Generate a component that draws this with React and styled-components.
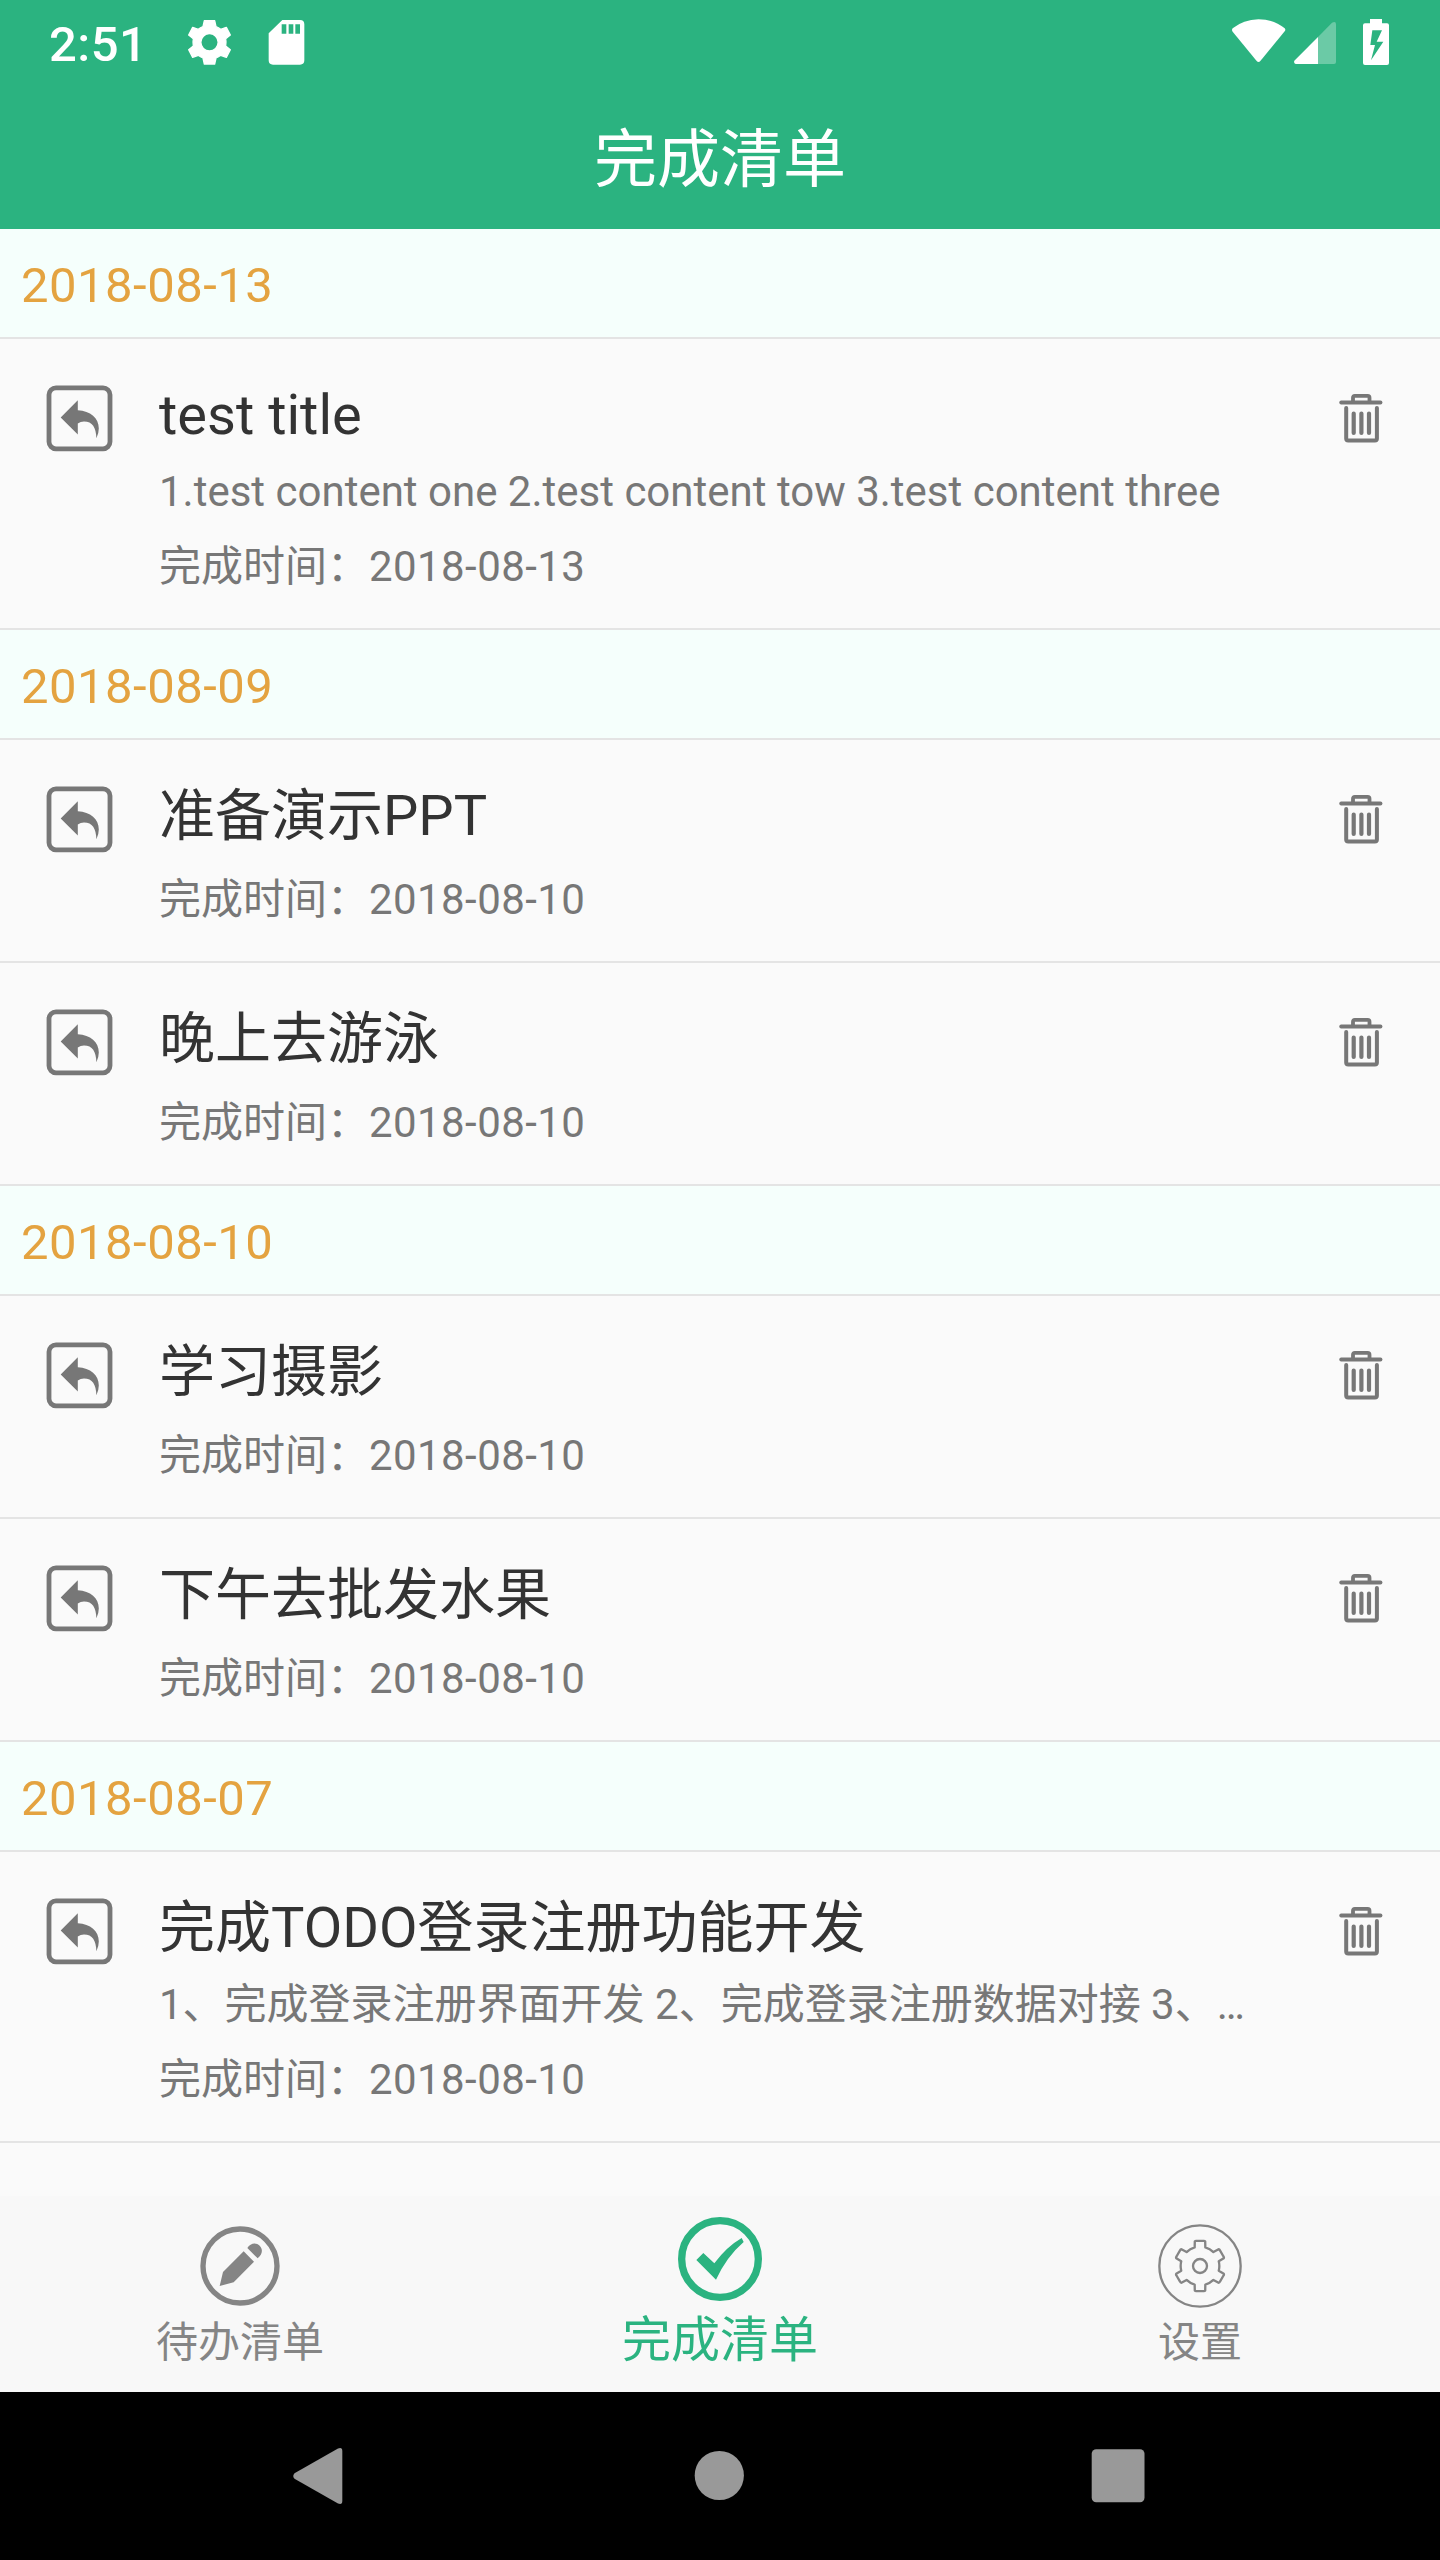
import React from "react";
import styled, { createGlobalStyle } from "styled-components";

const GlobalStyle = createGlobalStyle`
  * { box-sizing: border-box; }
  html, body { margin: 0; padding: 0; background: #fafafa; }
  body { font-family: Roboto, "Noto Sans CJK SC", sans-serif; }
  svg { display: block; flex: none; }
`;

const GREEN = "#2bb380";
const GREY = "#777777";
const TAB_GREY = "#858585";

const Screen = styled.div`
  width: 1440px;
  height: 2560px;
  display: flex;
  flex-direction: column;
  background: #fafafa;
  overflow: hidden;
`;

const Header = styled.header`
  flex: none;
  height: 229px;
  background: ${GREEN};
  color: #fff;
`;

const StatusBar = styled.div`
  display: flex;
  height: 84px;
  padding: 0 51px 0 49px;
`;

const Clock = styled.span`
  width: 138px;
  padding-top: 3px;
  font-size: 49px;
  font-weight: 500;
  letter-spacing: 0.5px;
  line-height: 84px;
`;

const StatusGroup = styled.div`
  display: flex;
  gap: ${(p) => p.$gap}px;
`;

const Spacer = styled.div`
  flex: 1;
`;

const PageTitle = styled.h1`
  margin: 0;
  padding-top: 3px;
  font-size: 63px;
  font-weight: 400;
  line-height: 145px;
  text-align: center;
`;

const List = styled.main`
  flex: 1;
`;

const DateHeader = styled.h2`
  margin: 0;
  height: 110px;
  padding: 3px 0 0 21px;
  border-bottom: 2px solid #e4e4e4;
  background: #f5fffc;
  color: #e4a340;
  font-size: 49px;
  font-weight: 400;
  letter-spacing: 0.49px;
  line-height: 108px;
`;

const Row = styled.article`
  display: flex;
  align-items: flex-start;
  padding: 41px 57px 33px 46px;
  border-bottom: 2px solid #e4e4e4;
`;

const IconButton = styled.button`
  flex: none;
  margin: ${(p) => p.$top}px 0 0;
  padding: 0;
  border: 0;
  background: none;
`;

const RowBody = styled.div`
  flex: 1;
  min-width: 0;
  padding-left: 46px;
  white-space: nowrap;
`;

const ItemTitle = styled.h3`
  margin: 0;
  color: #333;
  font-size: 56px;
  font-weight: 400;
  line-height: 70px;
`;

const ItemContent = styled.p`
  margin: 14px 0 -2px;
  color: ${GREY};
  font-size: 42px;
  line-height: 56px;
`;

const ItemTime = styled.p`
  margin: 21px 0 0;
  color: ${GREY};
  font-size: 42px;
  line-height: 56px;
`;

const TimeValue = styled.time`
  letter-spacing: 0.42px;
`;

const TabBar = styled.nav`
  flex: none;
  display: grid;
  grid-template-columns: repeat(3, 1fr);
  height: 196px;
  background: #f8f8f8;
`;

const Tab = styled.div`
  display: flex;
  flex-direction: column;
  align-items: center;
  gap: ${(p) => (p.$active ? 10 : 5)}px;
  padding-top: ${(p) => (p.$active ? 21 : 28)}px;
  color: ${(p) => (p.$active ? GREEN : TAB_GREY)};
  font-size: ${(p) => (p.$active ? 49 : 42)}px;
  line-height: 60px;
`;

const SystemNav = styled.footer`
  flex: none;
  display: grid;
  grid-template-columns: repeat(3, 400px);
  justify-items: center;
  align-items: center;
  height: 168px;
  padding-left: 119px;
  background: #000;
`;

const GearSolid = () => (
  <svg width="45" height="84" viewBox="561 0 135 252">
    <path
      fill="#fff"
      stroke="#fff"
      strokeWidth="4"
      strokeLinejoin="round"
      fillRule="evenodd"
      d="M613 62H644L648 80Q656 83 662 88L679 82L691 105L677 116Q679 127 677 138L691 149L679 172L662 166Q656 171 648 174L644 192H613L609 174Q601 171 595 166L578 172L566 149L580 138Q578 127 580 116L566 105L578 82L595 88Q601 83 609 80ZM628.5 101a26 26 0 1 0 0 52a26 26 0 1 0 0-52Z"
    />
  </svg>
);

const SdCard = () => (
  <svg width="37" height="84" viewBox="804 0 111 252">
    <path
      fill="#fff"
      fillRule="evenodd"
      d="M847 60H900Q913 60 913 73V181Q913 194 900 194H819Q806 194 806 181V100ZM845 73V101H859V73ZM866 73V101H880V73ZM886 73V101H900V73Z"
    />
  </svg>
);

const Wifi = () => (
  <svg width="54" height="84" viewBox="216 0 162 252">
    <path
      fill="#fff"
      d="M218 85Q250 58 295.500 57.500Q341 58 374 85Q378 89 374 94L301 183Q295.500 189 290 183L218 95Q214 90 218 85Z"
    />
  </svg>
);

const Signal = () => (
  <svg width="42" height="84" viewBox="402 0 126 252">
    <path fill="#fff" fillOpacity=".3" d="M474 111L516 68Q528 62 528 73V186Q528 192 522 192H474Z" />
    <path fill="#fff" d="M474 111V192H407Q400 190 403 182Z" />
  </svg>
);

const Battery = () => (
  <svg width="26" height="84" viewBox="609 0 78 252">
    <path
      fill="#fff"
      fillRule="evenodd"
      d="M630 57H666V70H681Q687 70 687 76V189Q687 195 681 195H615Q609 195 609 189V76Q609 70 615 70H630ZM637 91L631 135H645L633 181L670 125H650L666 91Z"
    />
  </svg>
);

const RestoreIcon = () => (
  <svg width="67" height="67" viewBox="0 0 67 67">
    <rect x="3" y="2.800" width="61" height="61" rx="7" fill="none" stroke={GREY} strokeWidth="4.800" />
    <path
      fill={GREY}
      d="M14.700 32.600L31.800 15.300V25.200C44.500 25.800 52.800 33 52.800 43.500Q52.800 48.500 50.400 53.200C50 42.500 46.500 36.600 38 36.600Q34.500 36.700 31.800 38.500V49.500Z"
    />
  </svg>
);

const TrashIcon = () => (
  <svg width="44" height="50" viewBox="0 0 44 50" fill="none" stroke={GREY} strokeLinecap="round" strokeLinejoin="round">
    <path strokeWidth="3.800" d="M2.200 9.500H41.500" />
    <path strokeWidth="3.800" strokeLinecap="butt" d="M14 9V4.700Q14 2.900 15.800 2.900H28.700Q30.500 2.900 30.500 4.700V9" />
    <path strokeWidth="4" d="M7.200 15V45.600Q7.200 47.600 9.200 47.600H35.900Q37.900 47.600 37.900 45.600V15" />
    <path strokeWidth="4.200" d="M14.700 20.600V39.900M22.400 20.600V39.900M30 20.600V39.900" />
  </svg>
);

const PencilTabIcon = () => (
  <svg width="84" height="84" viewBox="234 132 252 252">
    <circle cx="360" cy="258" r="111" fill="none" stroke={TAB_GREY} strokeWidth="16" />
    <path
      fill={TAB_GREY}
      d="M299 318L309 276L371 214L402 245L341 307ZM382 204C391 189 408 186 419 197C430 208 427 223 413 235Z"
    />
  </svg>
);

const CheckTabIcon = () => (
  <svg width="84" height="84" viewBox="294 111 252 252">
    <circle cx="420" cy="237" r="115" fill="none" stroke={GREEN} strokeWidth="22" />
    <path fill={GREEN} d="M349 240L370 219L403 250Q440 200 485 174L491 186Q440 230 408 299Z" />
  </svg>
);

const polar = (radius, degrees) => {
  const a = (degrees * Math.PI) / 180;
  return `${(126 + radius * Math.sin(a)).toFixed(1)} ${(126 - radius * Math.cos(a)).toFixed(1)}`;
};

const gearOutline =
  [0, 60, 120, 180, 240, 300]
    .map((angle, i) => {
      const start = i === 0 ? `M${polar(58, -16)}` : `A58 58 0 0 1 ${polar(58, angle - 16)}`;
      return `${start}L${polar(75, angle - 12)}Q${polar(77, angle - 10.5)} ${polar(76, angle - 8)}L${polar(76, angle + 8)}Q${polar(77, angle + 10.5)} ${polar(75, angle + 12)}L${polar(58, angle + 16)}`;
    })
    .join("") + `A58 58 0 0 1 ${polar(58, -16)}Z`;

const SettingsTabIcon = () => (
  <svg width="84" height="84" viewBox="0 0 252 252" fill="none" stroke={TAB_GREY} strokeWidth="7" strokeLinejoin="round">
    <circle cx="126" cy="126" r="122" />
    <circle cx="126" cy="126" r="21" />
    <path d={gearOutline} />
  </svg>
);

const BackKey = () => (
  <svg width="60" height="60" viewBox="0 0 60 60">
    <path fill="#999" d="M5.500 27.200L49 2.500Q53.300 .8 53.300 5V55Q53.300 59.200 49 57.500L5.500 32.800Q3 30 5.500 27.200Z" />
  </svg>
);

const HomeKey = () => (
  <svg width="60" height="60" viewBox="0 0 60 60">
    <circle cx="30.300" cy="29.500" r="24.600" fill="#999" />
  </svg>
);

const RecentKey = () => (
  <svg width="60" height="60" viewBox="0 0 60 60">
    <rect x="2.700" y="3.300" width="52.800" height="53" rx="4.500" fill="#999" />
  </svg>
);

const groups = [
  {
    date: "2018-08-13",
    items: [
      {
        title: "test title",
        content: "1.test content one 2.test content tow 3.test content three",
        done: "2018-08-13",
      },
    ],
  },
  {
    date: "2018-08-09",
    items: [
      { title: "准备演示PPT", done: "2018-08-10" },
      { title: "晚上去游泳", done: "2018-08-10" },
    ],
  },
  {
    date: "2018-08-10",
    items: [
      { title: "学习摄影", done: "2018-08-10" },
      { title: "下午去批发水果", done: "2018-08-10" },
    ],
  },
  {
    date: "2018-08-07",
    items: [
      {
        title: "完成TODO登录注册功能开发",
        content: "1、完成登录注册界面开发 2、完成登录注册数据对接 3、…",
        done: "2018-08-10",
      },
    ],
  },
];

const TodoRow = ({ item }) => (
  <Row>
    <IconButton $top={5}>
      <RestoreIcon />
    </IconButton>
    <RowBody>
      <ItemTitle>{item.title}</ItemTitle>
      {item.content && <ItemContent>{item.content}</ItemContent>}
      <ItemTime>
        完成时间：<TimeValue>{item.done}</TimeValue>
      </ItemTime>
    </RowBody>
    <IconButton $top={13}>
      <TrashIcon />
    </IconButton>
  </Row>
);

export default function App() {
  return (
    <Screen lang="zh-CN">
      <GlobalStyle />
      <Header>
        <StatusBar>
          <Clock>2:51</Clock>
          <StatusGroup $gap={36}>
            <GearSolid />
            <SdCard />
          </StatusGroup>
          <Spacer />
          <StatusGroup $gap={27}>
            <StatusGroup $gap={8}>
              <Wifi />
              <Signal />
            </StatusGroup>
            <Battery />
          </StatusGroup>
        </StatusBar>
        <PageTitle>完成清单</PageTitle>
      </Header>
      <List>
        {groups.map((group) => (
          <section key={group.date}>
            <DateHeader>{group.date}</DateHeader>
            {group.items.map((item) => (
              <TodoRow key={item.title} item={item} />
            ))}
          </section>
        ))}
      </List>
      <TabBar>
        <Tab>
          <PencilTabIcon />
          <span>待办清单</span>
        </Tab>
        <Tab $active>
          <CheckTabIcon />
          <span>完成清单</span>
        </Tab>
        <Tab>
          <SettingsTabIcon />
          <span>设置</span>
        </Tab>
      </TabBar>
      <SystemNav>
        <BackKey />
        <HomeKey />
        <RecentKey />
      </SystemNav>
    </Screen>
  );
}
